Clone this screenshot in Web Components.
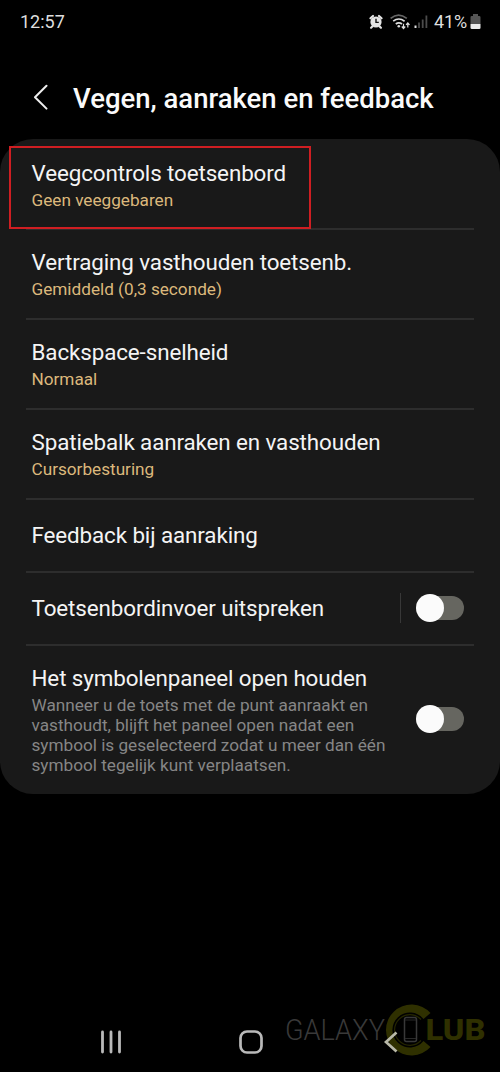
<!DOCTYPE html>
<html lang="nl">
<head>
<meta charset="utf-8">
<title>Vegen, aanraken en feedback</title>
<style>
html,body{margin:0;background:#000}
body{width:500px;height:1072px;overflow:hidden;font-family:Roboto,sans-serif;color:#f5f5f5}
</style>
</head>
<body>
<settings-screen></settings-screen>
<script>
const define = (name, html) => customElements.define(name, class extends HTMLElement {
  constructor() {
    super();
    this.attachShadow({mode: 'open'}).innerHTML = html;
  }
});

define('status-bar', `
<style>
:host{display:flex;height:44px;box-sizing:border-box;padding:0 19px 0 20px;align-items:center;justify-content:space-between;font-size:18px;line-height:20px;color:#dedede}
.right{display:flex;align-items:center}
.pct{margin-left:6px;letter-spacing:-.1px}
svg{display:block}
</style>
<span>12:57</span>
<div class="right">
<svg width="59" height="20" viewBox="369 12 59 20">
  <circle cx="376" cy="22" r="5.6" fill="#e4e4e4"/>
  <path d="M370.500 18.300l2.500-2.300M381.500 18.300l-2.500-2.300M372.300 26.500l-1.200 1.200M379.700 26.500l1.200 1.200" stroke="#e4e4e4" stroke-width="2.200" stroke-linecap="round"/>
  <path d="M376 18.800v3.600h2.800" stroke="#111" stroke-width="1.400" fill="none"/>
  <path d="M390.600 18.400Q398.500 11.800 406.800 18.400" stroke="#666" stroke-width="1.700" fill="none"/>
  <path d="M393.200 21.200Q398.700 16.800 404.600 21.200M395.800 24Q398.800 21.600 402 24" stroke="#dedede" stroke-width="1.700" fill="none"/>
  <circle cx="398.800" cy="26.300" r="1.300" fill="#dedede"/>
  <path d="M403.500 23.800v4.400M401.800 26.500l1.700 2 1.700-2M407.800 27.500v-4.400M406.100 24.900l1.700-2 1.700 2" stroke="#dedede" stroke-width="1.200" fill="none"/>
  <path d="M415.500 25.500v2.500" stroke="#dedede" stroke-width="2"/>
  <path d="M419 22.500v5.500M422.700 19.500v8.500M426.400 15.500v12.500" stroke="#4c4c4c" stroke-width="1.800"/>
</svg>
<span class="pct">41%</span>
<svg width="11" height="16" viewBox="0 0 11 16" style="margin-left:3px">
  <path d="M3 0h5v2h1.200q1.300 0 1.300 1.300V10H.5V3.300Q.5 2 1.800 2H3z" fill="#555"/>
  <path d="M.5 10h10v3.700q0 1.300-1.300 1.300H1.800Q.5 15 .5 13.700z" fill="#ededed"/>
</svg>
</div>`);

define('page-header', `
<style>
:host{display:flex;height:95px;box-sizing:border-box;padding:0 0 0 33px;align-items:flex-start}
svg{display:block;margin-top:40px}
h1{margin:39px 0 0 24px;font:500 27.500px/32px Roboto,sans-serif;color:#fafafa;white-space:nowrap}
</style>
<svg width="16" height="26" viewBox="0 0 16 26"><path d="M13.500 1.800L2 13.200 13.500 24.600" fill="none" stroke="#eee" stroke-width="2" stroke-linecap="round" stroke-linejoin="round"/></svg>
<h1><slot></slot></h1>`);

define('toggle-switch', `
<style>
:host{display:flex;align-items:center;width:48px;height:28px}
.track{width:47px;height:24px;margin-left:1px;border-radius:12px;background:#666660;display:flex;align-items:center}
.thumb{width:28px;height:28px;margin-left:-1px;border-radius:50%;background:#fbfbfb;flex:none}
</style>
<div class="track"><div class="thumb"></div></div>`);

define('setting-row', `
<style>
:host{display:flex;flex-direction:column;height:90px;box-sizing:border-box;padding:0 26px;position:relative}
:host([single]){height:73px}
:host([tall]){height:149px}
.body{flex:1;display:flex;padding:0 10px 0 5.500px;align-items:flex-start;justify-content:space-between}
.text{padding-top:18px}
:host([marked]) .text{padding-top:19px}
:host([single]) .text{padding-top:21px}
.title{font-size:22.400px;letter-spacing:-.11px;line-height:30px;color:#f4f4f4;white-space:nowrap}
.sub{font-size:17.200px;letter-spacing:-.01px;line-height:20px;margin-top:2px;color:#dcb87c;white-space:nowrap}
:host([tall]) .sub{color:#868686}
.line{height:2px;background:#2d2d2d;margin-bottom:-1px;z-index:1}
:host([last]) .line{display:none}
.control{display:flex;align-items:center;height:28px;margin-top:22px}
:host([tall]) .control{margin-top:60px}
:host([split]) .control::before{content:"";width:1px;height:30px;background:#383838;margin-right:15px}
:host([marked])::after{content:"";position:absolute;left:9px;top:7px;width:302px;height:83px;box-sizing:border-box;border:2px solid #cf1e22;z-index:2}
</style>
<div class="body">
  <div class="text"><div class="title"><slot></slot></div><div class="sub"><slot name="sub"></slot></div></div>
  <div class="control"><slot name="control"></slot></div>
</div>
<div class="line"></div>`);

define('settings-card', `
<style>:host{display:block;height:655px;background:#191919;border-radius:33px}</style>
<slot></slot>`);

define('nav-bar', `
<style>
:host{display:block;height:102px;margin-top:176px}
svg{display:block}
text{font-family:Roboto,sans-serif}
</style>
<svg width="500" height="102" viewBox="0 970 500 102">
  <text x="285" y="1040" font-size="29.500" font-weight="300" fill="#393939" textLength="100" lengthAdjust="spacingAndGlyphs">GALAXY</text>
  <path d="M430.500 1013A25.500 25.500 0 1 0 430.500 1047L423.500 1041A17.500 17.500 0 1 1 423.500 1019Z" fill="#2f3000"/>
  <path d="M421 1019.500A15.300 15.300 0 1 0 421 1040.500" fill="none" stroke="#252600" stroke-width="1.200"/>
  <rect x="404.500" y="1017.500" width="12" height="24" rx="2" fill="#000" stroke="#383838" stroke-width="1.500"/>
  <path d="M405 1020h11M405 1038.500h11" stroke="#292929"/>
  <text x="425.500" y="1040" font-size="29" font-weight="800" fill="#2f3000" textLength="60" lengthAdjust="spacingAndGlyphs">LUB</text>
  <path d="M102.500 1032v20M111 1032v20M119.500 1032v20" stroke="#b9b9b9" stroke-width="2.800" stroke-linecap="round"/>
  <rect x="240.500" y="1031.500" width="21" height="21" rx="6.500" fill="none" stroke="#b9b9b9" stroke-width="2.700"/>
  <path d="M396.500 1032.500L386 1042 396.500 1051.500" fill="none" stroke="#b9b9a8" stroke-width="2.700"/>
</svg>`);

define('settings-screen', `
<style>:host{display:flex;flex-direction:column;width:500px;height:1072px;background:#000;overflow:hidden}
:host>*{flex:none}</style>
<status-bar></status-bar>
<page-header>Vegen, aanraken en feedback</page-header>
<settings-card>
  <setting-row marked>Veegcontrols toetsenbord<span slot="sub">Geen veeggebaren</span></setting-row>
  <setting-row>Vertraging vasthouden toetsenb.<span slot="sub">Gemiddeld (0,3 seconde)</span></setting-row>
  <setting-row>Backspace-snelheid<span slot="sub">Normaal</span></setting-row>
  <setting-row>Spatiebalk aanraken en vasthouden<span slot="sub">Cursorbesturing</span></setting-row>
  <setting-row single>Feedback bij aanraking</setting-row>
  <setting-row single split>Toetsenbordinvoer uitspreken<toggle-switch slot="control"></toggle-switch></setting-row>
  <setting-row tall last>Het symbolenpaneel open houden<span slot="sub">Wanneer u de toets met de punt aanraakt en<br>vasthoudt, blijft het paneel open nadat een<br>symbool is geselecteerd zodat u meer dan één<br>symbool tegelijk kunt verplaatsen.</span><toggle-switch slot="control"></toggle-switch></setting-row>
</settings-card>
<nav-bar></nav-bar>`);
</script>
</body>
</html>
